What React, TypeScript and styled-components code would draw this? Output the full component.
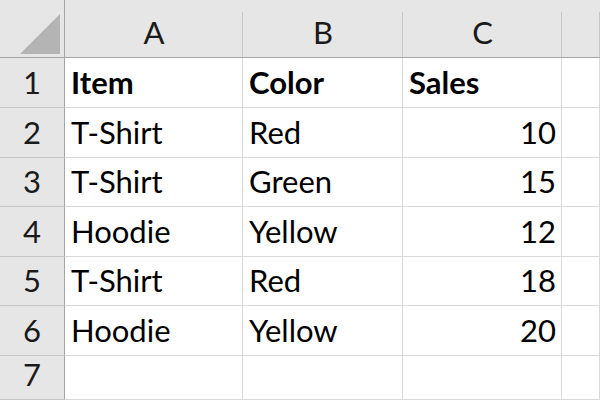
import React from "react";
import styled, { createGlobalStyle } from "styled-components";

const colors = {
  headerBg: "#e6e6e6",
  headerLine: "#c6c6c6",
  headerEdge: "#a5a5a5",
  grid: "#d9d9d9",
  corner: "#b4b4b4",
  text: "#000000",
};

const GlobalStyle = createGlobalStyle`
  html, body {
    margin: 0;
    padding: 0;
    background: #ffffff;
    overflow: hidden;
  }
`;

const Sheet = styled.div`
  display: grid;
  grid-template-columns: 65px 178px 160px 159px 1fr;
  grid-template-rows: 58px 50px 50px 49px 50px 49px 50px 1fr;
  width: 600px;
  height: 400px;
  font-family: Lato, "Open Sans", sans-serif;
  font-size: 31px;
  color: ${colors.text};
  overflow: hidden;
`;

const Corner = styled.div`
  position: relative;
  background: ${colors.headerBg};
  border-right: 1px solid ${colors.headerEdge};
  border-bottom: 1px solid ${colors.headerEdge};
  box-sizing: border-box;

  svg {
    position: absolute;
    right: 4px;
    bottom: 3px;
  }
`;

const ColHead = styled.div`
  position: relative;
  display: flex;
  align-items: flex-end;
  justify-content: center;
  padding-bottom: 9px;
  background: ${colors.headerBg};
  border-bottom: 1px solid ${colors.headerEdge};
  box-sizing: border-box;
  line-height: 1;
  color: #1a1a1a;

  &::after {
    content: "";
    position: absolute;
    top: 12px;
    bottom: 0;
    right: 0;
    width: 1px;
    background: ${colors.headerLine};
  }
`;

const RowHead = styled.div`
  display: flex;
  align-items: flex-end;
  justify-content: center;
  padding-bottom: 9px;
  background: ${colors.headerBg};
  border-right: 1px solid ${colors.headerEdge};
  border-bottom: 1px solid ${colors.headerLine};
  box-sizing: border-box;
  line-height: 1;
  color: #1a1a1a;
`;

const Cell = styled.div<{ $bold?: boolean; $right?: boolean }>`
  display: flex;
  align-items: flex-end;
  justify-content: ${(p) => (p.$right ? "flex-end" : "flex-start")};
  padding: 0 5px 9px 6px;
  border-right: 1px solid ${colors.grid};
  border-bottom: 1px solid ${colors.grid};
  box-sizing: border-box;
  line-height: 1;
  font-weight: ${(p) => (p.$bold ? 700 : 400)};
  white-space: nowrap;
  overflow: hidden;
`;

const columns = ["A", "B", "C", ""];

const rows: (string | number)[][] = [
  ["Item", "Color", "Sales"],
  ["T-Shirt", "Red", 10],
  ["T-Shirt", "Green", 15],
  ["Hoodie", "Yellow", 12],
  ["T-Shirt", "Red", 18],
  ["Hoodie", "Yellow", 20],
  ["", "", ""],
];

const App = () => (
  <>
    <GlobalStyle />
    <Sheet>
      <Corner>
        <svg width="40" height="40" viewBox="0 0 40 40">
          <polygon points="40,0 40,40 0,40" fill={colors.corner} />
        </svg>
      </Corner>
      {columns.map((c, i) => (
        <ColHead key={i}>{c}</ColHead>
      ))}
      {rows.map((row, r) => (
        <React.Fragment key={r}>
          <RowHead>{r + 1}</RowHead>
          {row.map((v, c) => (
            <Cell key={c} $bold={r === 0} $right={typeof v === "number"}>
              {v}
            </Cell>
          ))}
          <Cell />
        </React.Fragment>
      ))}
    </Sheet>
  </>
);

export default App;
